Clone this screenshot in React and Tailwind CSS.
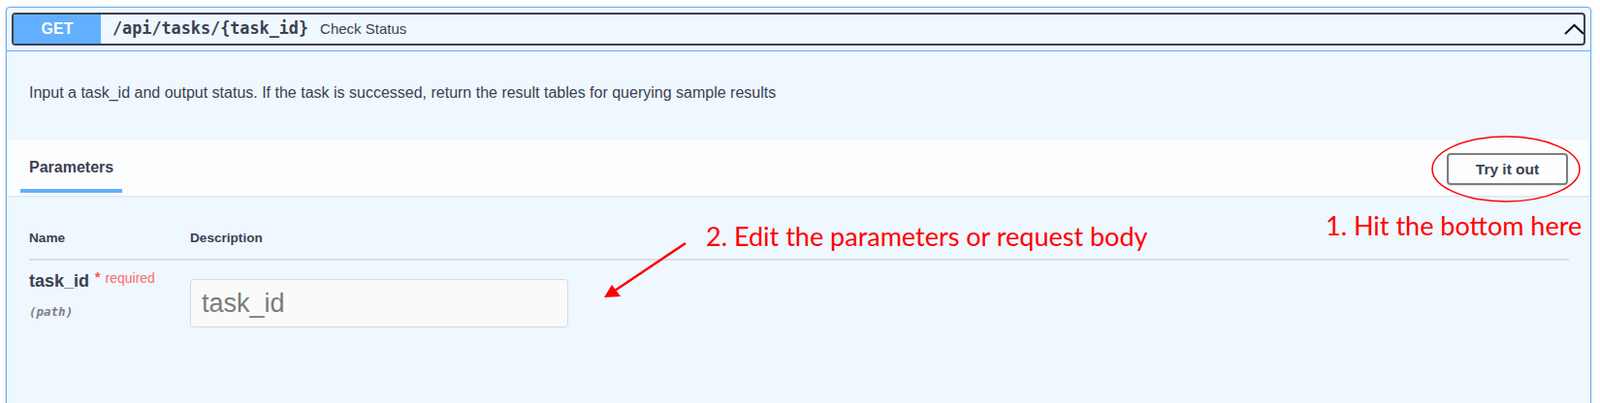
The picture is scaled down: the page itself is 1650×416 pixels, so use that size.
export default function App() {
  return (
    <div className="relative h-[416px] overflow-hidden bg-white pt-[7px] pl-[6px] pr-[9px] font-['Liberation_Sans',Arial,sans-serif] text-[#3b4151]">
      <div className="h-[440px] rounded-[4px] border border-[#61affe] bg-[#eff7ff] shadow-[0_0_3px_rgba(0,0,0,0.19)]">
        {/* summary */}
        <div className="border-b border-[#61affe] p-[5px]">
          <div className="flex h-[34px] items-center overflow-hidden rounded-[4px] border-2 border-[#3b4151]">
            <span className="flex h-full w-[90px] items-center justify-center bg-[#61affe] text-[16px] font-bold text-white">
              GET
            </span>
            <span className="ml-[12px] font-['DejaVu_Sans_Mono',monospace] text-[16.8px] font-bold">
              /api/tasks/{"{task_id}"}
            </span>
            <span className="ml-[12px] text-[15px]">Check Status</span>
            <svg className="ml-auto mr-[-1px]" width="21" height="12" viewBox="0 0 21 12">
              <polyline points="1,11 10.5,2 20,11" fill="none" stroke="#111" strokeWidth="2" />
            </svg>
          </div>
        </div>

        {/* description */}
        <div className="h-[91px] pl-[23px] pt-[33px] text-[16px] leading-[20px]">
          Input a task_id and output status. If the task is successed, return the result tables for querying sample results
        </div>

        {/* tabs */}
        <div className="flex h-[58px] items-stretch justify-between bg-[#fcfdff] pl-[14px] pr-[23px] shadow-[0_1px_2px_rgba(0,0,0,0.1)]">
          <div className="flex flex-col pt-[19px]">
            <span className="px-[9px] text-[16px] font-bold leading-[20px]">Parameters</span>
            <div className="mt-[12px] h-[4px] bg-[#61affe]" />
          </div>
          <div className="flex items-center pt-[3px]">
            <button className="h-[33px] w-[125px] rounded-[4px] border-2 border-[#7d7d7d] bg-transparent text-[15.5px] font-bold shadow-[0_1px_2px_rgba(0,0,0,0.1)]">
              Try it out
            </button>
          </div>
        </div>

        {/* parameters table */}
        <div className="pl-[23px] pr-[22px]">
          <div className="flex border-b-2 border-[#dadfe6] pt-[35px] pb-[12px] text-[13.6px] font-bold leading-[18px]">
            <div className="w-[166px]">Name</div>
            <div>Description</div>
          </div>
          <div className="flex">
            <div className="w-[166px] pt-[10px]">
              <div className="flex items-start leading-[22px]">
                <span className="text-[18px] font-bold">task_id</span>
                <span className="ml-[6px] text-[14px] font-bold leading-[14px] text-[#ff4d4d]">*</span>
                <span className="ml-[5px] pt-[1px] text-[14px] leading-[14px] text-[#ff6b6b]">required</span>
              </div>
              <div className="mt-[13px] font-['DejaVu_Sans_Mono',monospace] text-[12.5px] font-semibold italic leading-[16px] text-[#808080]">
                (path)
              </div>
            </div>
            <div className="pt-[19px]">
              <input
                placeholder="task_id"
                className="h-[50px] w-[390px] rounded-[4px] border border-[#d9d9d9] bg-[#fafafa] px-[11px] text-[27px] text-[#3b4151] outline-none placeholder:text-[#7b7b7b]"
              />
            </div>
          </div>
        </div>
      </div>

      {/* annotations */}
      <svg className="pointer-events-none absolute left-0 top-0" width="1650" height="416">
        <ellipse cx="1553" cy="174.5" rx="76" ry="33.5" fill="none" stroke="#ff0000" strokeWidth="1.5" />
        <line x1="707" y1="251" x2="634" y2="300" stroke="#ff0000" strokeWidth="2.5" />
        <polygon points="623,307 631,294 640,306" fill="#ff0000" />
      </svg>
      <div className="absolute left-[1367px] top-[216px] font-['Lato',sans-serif] text-[27px] leading-[34px] text-[#ff0000]">
        1. Hit the bottom here
      </div>
      <div className="absolute left-[728px] top-[227px] font-['Lato',sans-serif] text-[27px] leading-[34px] text-[#ff0000]">
        2. Edit the parameters or request body
      </div>
    </div>
  )
}
